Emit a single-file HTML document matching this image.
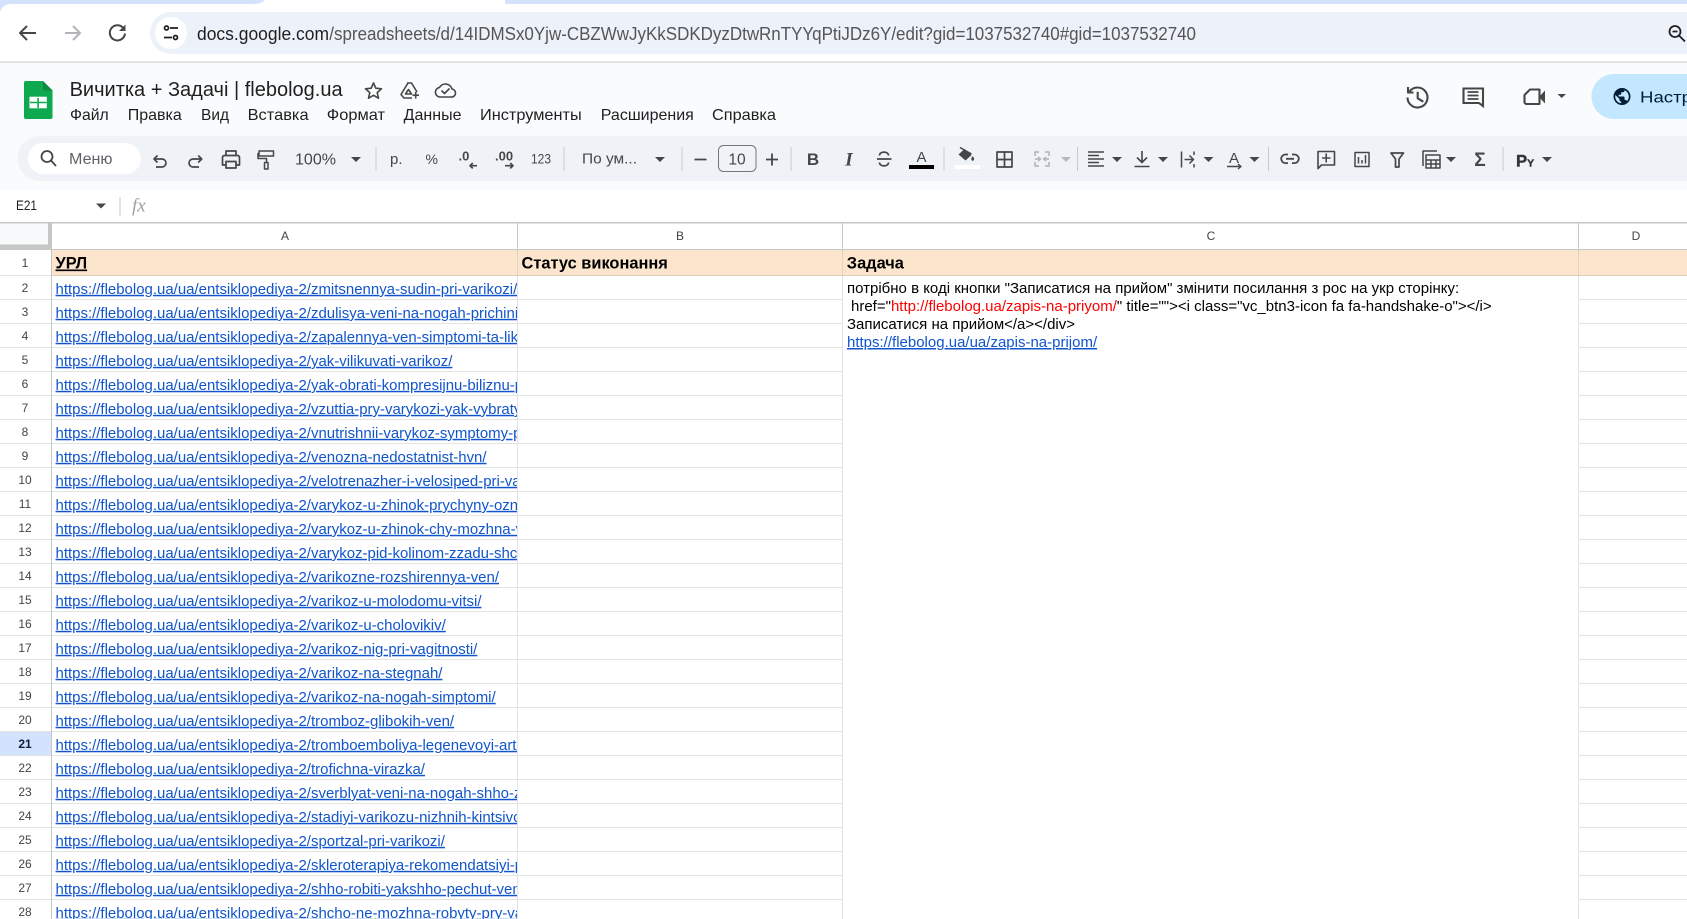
<!DOCTYPE html>
<html lang="uk"><head><meta charset="utf-8"><title>Вичитка + Задачі | flebolog.ua</title>
<style>
html,body{margin:0;padding:0;background:#fff;width:1687px;height:919px;overflow:hidden}
svg{display:block;font-family:"Liberation Sans","Noto Sans CJK SC",sans-serif}
.i{fill:none;stroke:#444746;stroke-width:1.7;stroke-linecap:butt;stroke-linejoin:round}
.c{fill:#444746;stroke:none}
.t{fill:#444746}
.m{font-size:15.6px;fill:#1f1f1f}
.lnk{font-size:14.97px;fill:#1155cc;text-decoration:underline}
.cell{font-size:15px;fill:#000}
.hd{font-size:16.4px;font-weight:bold;fill:#000}
.b{font-weight:bold}
.n{font-size:12px;fill:#444;text-anchor:middle}
.sep{stroke:#c7c9cc;stroke-width:1}
.g{stroke:#e2e3e3;stroke-width:1}
.h{stroke:#c4c7c5;stroke-width:1}
</style></head><body>
<svg width="1687" height="919" viewBox="0 0 1687 919" xmlns="http://www.w3.org/2000/svg">
<defs><clipPath id="ca"><rect x="52" y="276" width="465" height="643"/></clipPath></defs>
<rect width="1687" height="919" fill="#fff"/>
<!-- browser chrome -->
<path d="M0 0H265C262 3 258 4 254 4H12C5 4 2 7 0 12Z" fill="#d3e3fd"/>
<rect x="505" y="0" width="1182" height="4" fill="#d3e3fd"/>
<rect x="150" y="12" width="1537" height="42" rx="21" fill="#edf2fa"/>
<rect x="1600" y="12" width="87" height="42" fill="#edf2fa"/>
<circle cx="171" cy="33" r="16" fill="#fff"/>
<g class="i" style="stroke-width:2"><path d="M36 33H20M27 26L20 33L27 40"/></g>
<g class="i" style="stroke:#b1b4b8;stroke-width:2"><path d="M65 33H80M73 26L80 33L73 40"/></g>
<g class="i" style="stroke-width:2"><path d="M123.3 28A7.6 7.6 0 1 0 125 33.5"/></g><path d="M125.5 24.5V31H119Z" fill="#444746"/>
<g class="i" style="stroke:#1f1f1f;stroke-width:1.7"><circle cx="166.5" cy="28" r="2"/><path d="M170 28H178M164 37.5H172"/><circle cx="175.5" cy="37.5" r="2"/></g>
<text x="197" y="40" font-size="18" fill="#1f1f1f" textLength="132" lengthAdjust="spacingAndGlyphs">docs.google.com</text>
<text x="329.3" y="40" font-size="18" fill="#555" textLength="866.7" lengthAdjust="spacingAndGlyphs">/spreadsheets/d/14IDMSx0Yjw-CBZWwJyKkSDKDyzDtwRnTYYqPtiJDz6Y/edit?gid=1037532740#gid=1037532740</text>
<g class="i" style="stroke:#1f1f1f;stroke-width:1.8"><circle cx="1675" cy="31.5" r="5.5"/><path d="M1672.5 31.5H1677.5M1679 35.5L1685 41.5"/></g>
<rect x="0" y="61" width="1687" height="2" fill="#e3e3e3"/>
<!-- sheets header -->
<rect x="0" y="63" width="1687" height="127" fill="#f9fbfd"/>
<path d="M26 81H43L52.5 90.5V117A2 2 0 0 1 50.5 119H26A2 2 0 0 1 24 117V83A2 2 0 0 1 26 81Z" fill="#0ea94f"/>
<path d="M43 81L52.5 90.5H45A2 2 0 0 1 43 88.500Z" fill="#0b8a40"/>
<rect x="29.500" y="96.700" width="17.300" height="11.600" fill="#fff"/>
<path d="M38.100 98V108M30 102.500H46.500" stroke="#0ea94f" stroke-width="1.600"/>
<text x="69.600" y="96" font-size="20" fill="#1f1f1f" textLength="273" lengthAdjust="spacingAndGlyphs">Вичитка + Задачі | flebolog.ua</text>
<g class="i" style="stroke-width:1.6">
<path d="M373.500 83L375.800 88.200L381.500 88.800L377.200 92.600L378.500 98.200L373.500 95.300L368.500 98.200L369.800 92.600L365.500 88.800L371.200 88.200Z"/>
<path d="M407 83H411.500L417 92M408 83L401 94.500L404 98H412M405.500 94H411.500L408.500 89.500ZM415.700 92V98.500M412.500 95.200H419" />
<path d="M441 97H451A4 4 0 0 0 452 89A6.800 6.800 0 0 0 439.500 87.500A4.800 4.800 0 0 0 441 97ZM441.500 90.500L444.500 93.500L449.500 88.500"/>
</g>
<g class="m">
<text x="70" y="120" textLength="38.700" lengthAdjust="spacingAndGlyphs">Файл</text>
<text x="127.800" y="120" textLength="54" lengthAdjust="spacingAndGlyphs">Правка</text>
<text x="201" y="120" textLength="28" lengthAdjust="spacingAndGlyphs">Вид</text>
<text x="247.600" y="120" textLength="61" lengthAdjust="spacingAndGlyphs">Вставка</text>
<text x="326.800" y="120" textLength="58.200" lengthAdjust="spacingAndGlyphs">Формат</text>
<text x="403.700" y="120" textLength="57.800" lengthAdjust="spacingAndGlyphs">Данные</text>
<text x="480" y="120" textLength="101.700" lengthAdjust="spacingAndGlyphs">Инструменты</text>
<text x="600.800" y="120" textLength="93" lengthAdjust="spacingAndGlyphs">Расширения</text>
<text x="712" y="120" textLength="64" lengthAdjust="spacingAndGlyphs">Справка</text>
</g>
<!-- right header -->
<g class="i" style="stroke-width:2.100">
<path d="M1409.500 91.500A10 10 0 1 1 1407.500 97.500"/><path d="M1408 87V92.500H1413.500"/><path d="M1417.700 91.700V98.300L1423.300 101.700"/>
<path d="M1463.500 88.500H1483V106L1479 103H1463.500Z" style="stroke-linejoin:miter"/>
<path d="M1467.500 92H1478.500M1467.500 95.500H1478.500M1467.500 99H1478.500" style="stroke-width:1.800"/>
<path d="M1530 89.500H1539.500V104H1526.500A2 2 0 0 1 1524.500 102V95Z"/>
</g>
<path d="M1539 97L1545 90.500V103.500Z" fill="#444746"/>
<path d="M1557.500 94H1566L1561.700 98Z" fill="#444746"/>
<path d="M1614 74H1687V119H1614A22.500 22.500 0 0 1 1614 74Z" fill="#c2e7ff"/>
<g transform="translate(1611.800 86.300) scale(.85)"><path fill="#001d35" d="M12 2C6.480 2 2 6.480 2 12s4.480 10 10 10 10-4.480 10-10S17.520 2 12 2zm-1 17.930c-3.950-.490-7-3.850-7-7.930 0-.620.080-1.210.210-1.790L9 15v1c0 1.100.900 2 2 2v1.930zm6.900-2.540c-.260-.810-1-1.390-1.900-1.390h-1v-3c0-.550-.450-1-1-1H8v-2h2c.550 0 1-.450 1-1V7h2c1.100 0 2-.900 2-2v-.410c2.930 1.190 5 4.060 5 7.410 0 2.080-.800 3.970-2.100 5.390z"/></g>
<text x="1640" y="102.500" font-size="16" fill="#001d35" textLength="52" lengthAdjust="spacingAndGlyphs">Настр</text>
<!-- toolbar -->
<path d="M40 136H1687V181H40A22.500 22.500 0 0 1 40 136Z" fill="#eff3f8"/>
<rect x="28" y="143" width="113" height="31" rx="15.500" fill="#fff"/>
<g class="i" style="stroke-width:1.800"><circle cx="47" cy="156.500" r="5.500"/><path d="M51 160.500L56 166"/></g>
<text x="69" y="164" font-size="15.500" fill="#5f6368" textLength="43.500" lengthAdjust="spacingAndGlyphs">Меню</text>
<g class="i">
<path d="M154 159H162A4 4 0 0 1 162 167H156M157.500 155.500L154 159L157.500 162.500"/>
<path d="M201.700 159H193A4 4 0 0 0 193 167H199M198.200 155.500L201.700 159L198.200 162.500"/>
<path d="M226 155V151H236V155M226 165H222.500V157.500A2 2 0 0 1 224.500 155.500H237.500A2 2 0 0 1 239.500 157.500V165H236M226 161.500H236V168H226Z"/>
<path d="M259 151H273.500V156H259ZM259 153.500H258V158.500H266.500V162M264.500 162.500H268V169H264.500Z" style="stroke-width:1.500"/>
</g>
<text x="295" y="164.500" font-size="15.500" class="t" textLength="41" lengthAdjust="spacingAndGlyphs">100%</text>
<path d="M351 157H361L356 162Z" class="c"/>
<path d="M376 147V171M564 147V171M682 147V171M791 147V171M944 147V171M1077.500 147V171M1268.500 147V171M1503 147V171" class="sep"/>
<text x="390" y="164" font-size="15" class="t">р.</text>
<text x="425.500" y="164" font-size="14" class="t">%</text>
<text x="458.500" y="160.700" font-size="13" class="t b">.0</text>
<path d="M477 165.700H470M472.800 163L470 165.700L472.800 168.400" class="i"/>
<text x="495" y="160.700" font-size="13" class="t b">.00</text>
<path d="M505 165.700H513M510.200 163L513 165.700L510.200 168.400" class="i"/>
<text x="531" y="163.500" font-size="13.500" class="t" textLength="20" lengthAdjust="spacingAndGlyphs">123</text>
<text x="582" y="163.500" font-size="15" class="t" textLength="55" lengthAdjust="spacingAndGlyphs">По ум...</text>
<path d="M655 157H665L660 162Z" class="c"/>
<path d="M694.500 159.500H706.500M766 159.500H778M772 153.500V165.500" class="i" style="stroke-width:1.800"/>
<rect x="718.500" y="145.500" width="37.500" height="26" rx="5" fill="none" stroke="#747775" stroke-width="1"/>
<text x="737" y="164.500" font-size="15.500" class="t" text-anchor="middle">10</text>
<text x="813" y="165" font-size="17" class="t b" text-anchor="middle">B</text>
<text x="849" y="165.500" font-size="19" class="t b" font-style="italic" text-anchor="middle" font-family="Liberation Serif">I</text>
<path d="M877 159H891.500M888.500 155.500C888.500 151 879.500 151 879.500 155.500M879.500 162.500C879.500 167 888.500 167 888.500 162.500" class="i"/>
<text x="921.500" y="162" font-size="15" class="t" text-anchor="middle">A</text>
<rect x="909" y="165" width="25" height="4" fill="#000"/>
<path d="M960 147.500L971.500 154" class="i" style="stroke-width:1.500"/>
<path d="M958.500 154.500L964.500 149L971.500 155L965.500 160.500Z" fill="#444746"/>
<path d="M972.700 156C974.200 158.500 975 159.500 972.700 161C970.400 159.500 971.200 158.500 972.700 156Z" fill="#444746"/>
<rect x="954" y="165" width="26" height="4" fill="#fff"/>
<path d="M997 152H1012V167H997ZM1004.500 152V167M997 159.500H1012" class="i" style="stroke-width:1.700"/>
<path d="M1035 156V152H1039M1035 162V166H1039M1049 156V152H1045M1049 162V166H1045M1035 159H1040M1038 157L1040.500 159L1038 161M1049 159H1044M1046 157L1043.500 159L1046 161" class="i" style="stroke:#b7babd"/>
<path d="M1061 157H1071L1066 162Z" fill="#b7babd"/>
<path d="M1088 152H1104M1088 155.500H1099M1088 159H1104M1088 162.500H1099M1088 166H1104" class="i" style="stroke-width:1.500"/>
<path d="M1112 157H1122L1117 162Z" class="c"/>
<path d="M1142 151V162M1137 157.500L1142 162.500L1147 157.500M1134.500 166.500H1149.500" class="i" style="stroke-width:1.600"/>
<path d="M1158 157H1168L1163 162Z" class="c"/>
<path d="M1181.500 151.500V167.500M1184.500 159.500H1193.500M1189.500 155.500L1193.500 159.500L1189.500 163.500M1194 151.500V155M1194 164V167.500" class="i" style="stroke-width:1.500"/>
<path d="M1203.500 157H1213.500L1208.500 162Z" class="c"/>
<text x="1234" y="163" font-size="15" class="t" text-anchor="middle">A</text>
<path d="M1227 166.500H1240M1238 164L1241 166.500L1238 169" class="i" style="stroke-width:1.400"/>
<path d="M1249.500 157H1259.500L1254.500 162Z" class="c"/>
<path d="M1288 154.500H1285.500A4.300 4.300 0 0 0 1285.500 163.100H1288M1292 154.500H1294.500A4.300 4.300 0 0 1 1294.500 163.100H1292M1286 158.800H1294" class="i" style="stroke-width:1.800"/>
<path d="M1318 151.500H1334.500V165H1321.500L1318 168.500ZM1326.200 153.500V162.500M1322 158H1330.500" class="i" style="stroke-width:1.600"/>
<path d="M1355 152.500H1369V166.500H1355ZM1358.500 157V163.500M1362 160V163.500M1365.500 155V163.500" class="i" style="stroke-width:1.500"/>
<path d="M1391 153H1403.500L1399 159V167H1395.500V159Z" class="i" style="stroke-width:1.700"/>
<path d="M1423 166V151H1437M1426 155H1440V168H1426ZM1426 160H1440M1431 160V168M1436 160V168M1426 164H1440" class="i" style="stroke-width:1.500"/>
<path d="M1446 157H1456L1451 162Z" class="c"/>
<text x="1480" y="166" font-size="19" class="t b" text-anchor="middle">Σ</text>
<text x="1516" y="166.500" font-size="16.700" font-weight="bold" fill="#333" stroke="#333" stroke-width=".4">Р<tspan font-size="10.500">Y</tspan></text>
<path d="M1542 157H1552L1547 162Z" class="c"/>
<!-- formula bar -->
<rect x="0" y="190" width="1687" height="32" fill="#fff"/>
<text x="16" y="210" font-size="13.500" fill="#1f1f1f" textLength="21" lengthAdjust="spacingAndGlyphs">E21</text>
<path d="M96 203.500H106L101 208.500Z" class="c"/>
<path d="M120 197V216" class="sep"/>
<text x="132" y="211.500" font-size="19" fill="#9ea1a4" font-style="italic" font-family="Liberation Serif">fx</text>
<!-- grid headers -->
<rect x="0" y="222" width="1687" height="1.500" fill="#c7c7c7"/>
<rect x="0" y="224" width="48" height="20.500" fill="#f8f9fa"/>
<rect x="48" y="223" width="4" height="26" fill="#c4c7c5"/>
<rect x="0" y="244.500" width="52" height="4.500" fill="#c4c7c5"/>
<rect x="0" y="249" width="1687" height="1" fill="#c7c7c7"/>
<path d="M517.500 223V249M842.500 223V249M1578.500 223V249" class="h"/>
<g class="n">
<text x="285" y="240">A</text><text x="680" y="240">B</text><text x="1211" y="240">C</text><text x="1636" y="240">D</text>
</g>
<!-- row 1 -->
<rect x="52" y="250" width="1635" height="25.500" fill="#fce5cd"/>
<path d="M517.500 250V276M842.500 250V276M1578.500 250V276" stroke="#e6d3be" stroke-width="1"/>
<path d="M52 275.500H1687" stroke="#e0cdb9" stroke-width="1"/>
<!-- row highlight -->
<rect x="0" y="732" width="51" height="24" fill="#d3e3fd"/>
<!-- grid lines -->
<path class="g" d="M0 275.500H52M0 299.500H842M0 323.500H842M0 347.500H842M0 371.500H842M0 395.500H842M0 419.500H842M0 443.500H842M0 467.500H842M0 491.500H842M0 515.500H842M0 539.500H842M0 563.500H842M0 587.500H842M0 611.500H842M0 635.500H842M0 659.500H842M0 683.500H842M0 707.500H842M0 731.500H842M0 755.500H842M0 779.500H842M0 803.500H842M0 827.500H842M0 851.500H842M0 875.500H842M0 899.500H842"/>
<path class="g" d="M1579 299.500H1687M1579 323.500H1687M1579 347.500H1687M1579 371.500H1687M1579 395.500H1687M1579 419.500H1687M1579 443.500H1687M1579 467.500H1687M1579 491.500H1687M1579 515.500H1687M1579 539.500H1687M1579 563.500H1687M1579 587.500H1687M1579 611.500H1687M1579 635.500H1687M1579 659.500H1687M1579 683.500H1687M1579 707.500H1687M1579 731.500H1687M1579 755.500H1687M1579 779.500H1687M1579 803.500H1687M1579 827.500H1687M1579 851.500H1687M1579 875.500H1687M1579 899.500H1687"/>
<path class="g" d="M517.500 276V919M842.500 276V919M1578.500 276V919"/>
<path d="M51.500 250V919" class="h"/>
<!-- row numbers -->
<g class="n">
<text x="25" y="267">1</text><text x="25" y="292">2</text><text x="25" y="316">3</text><text x="25" y="340">4</text><text x="25" y="364">5</text><text x="25" y="388">6</text><text x="25" y="412">7</text><text x="25" y="436">8</text><text x="25" y="460">9</text><text x="25" y="484">10</text><text x="25" y="508">11</text><text x="25" y="532">12</text><text x="25" y="556">13</text><text x="25" y="580">14</text><text x="25" y="604">15</text><text x="25" y="628">16</text><text x="25" y="652">17</text><text x="25" y="676">18</text><text x="25" y="700">19</text><text x="25" y="724">20</text><text x="25" y="748" font-weight="bold" fill="#0b1f3f">21</text><text x="25" y="772">22</text><text x="25" y="796">23</text><text x="25" y="820">24</text><text x="25" y="844">25</text><text x="25" y="868">26</text><text x="25" y="892">27</text><text x="25" y="916">28</text>
</g>
<!-- header row text -->
<text x="55.500" y="268.500" class="hd" text-decoration="underline">УРЛ</text>
<text x="521.500" y="268.500" class="hd">Статус виконання</text>
<text x="846.800" y="268.500" class="hd">Задача</text>
<!-- links -->
<g clip-path="url(#ca)" class="lnk">
<text x="55.500" y="293.800">https://flebolog.ua/ua/entsiklopediya-2/zmitsnennya-sudin-pri-varikozi/</text>
<text x="55.500" y="317.800">https://flebolog.ua/ua/entsiklopediya-2/zdulisya-veni-na-nogah-prichini/</text>
<text x="55.500" y="341.800">https://flebolog.ua/ua/entsiklopediya-2/zapalennya-ven-simptomi-ta-likuvannya/</text>
<text x="55.500" y="365.800">https://flebolog.ua/ua/entsiklopediya-2/yak-vilikuvati-varikoz/</text>
<text x="55.500" y="389.800">https://flebolog.ua/ua/entsiklopediya-2/yak-obrati-kompresijnu-biliznu-pri-varikozi/</text>
<text x="55.500" y="413.800">https://flebolog.ua/ua/entsiklopediya-2/vzuttia-pry-varykozi-yak-vybraty/</text>
<text x="55.500" y="437.800">https://flebolog.ua/ua/entsiklopediya-2/vnutrishnii-varykoz-symptomy-prychyny/</text>
<text x="55.500" y="461.800">https://flebolog.ua/ua/entsiklopediya-2/venozna-nedostatnist-hvn/</text>
<text x="55.500" y="485.800">https://flebolog.ua/ua/entsiklopediya-2/velotrenazher-i-velosiped-pri-varikozi/</text>
<text x="55.500" y="509.800">https://flebolog.ua/ua/entsiklopediya-2/varykoz-u-zhinok-prychyny-oznaky/</text>
<text x="55.500" y="533.800">https://flebolog.ua/ua/entsiklopediya-2/varykoz-u-zhinok-chy-mozhna-vylikuvaty/</text>
<text x="55.500" y="557.800">https://flebolog.ua/ua/entsiklopediya-2/varykoz-pid-kolinom-zzadu-shcho-robyty/</text>
<text x="55.500" y="581.800">https://flebolog.ua/ua/entsiklopediya-2/varikozne-rozshirennya-ven/</text>
<text x="55.500" y="605.800">https://flebolog.ua/ua/entsiklopediya-2/varikoz-u-molodomu-vitsi/</text>
<text x="55.500" y="629.800">https://flebolog.ua/ua/entsiklopediya-2/varikoz-u-cholovikiv/</text>
<text x="55.500" y="653.800">https://flebolog.ua/ua/entsiklopediya-2/varikoz-nig-pri-vagitnosti/</text>
<text x="55.500" y="677.800">https://flebolog.ua/ua/entsiklopediya-2/varikoz-na-stegnah/</text>
<text x="55.500" y="701.800">https://flebolog.ua/ua/entsiklopediya-2/varikoz-na-nogah-simptomi/</text>
<text x="55.500" y="725.800">https://flebolog.ua/ua/entsiklopediya-2/tromboz-glibokih-ven/</text>
<text x="55.500" y="749.800">https://flebolog.ua/ua/entsiklopediya-2/tromboemboliya-legenevoyi-arteriyi/</text>
<text x="55.500" y="773.800">https://flebolog.ua/ua/entsiklopediya-2/trofichna-virazka/</text>
<text x="55.500" y="797.800">https://flebolog.ua/ua/entsiklopediya-2/sverblyat-veni-na-nogah-shho-zrobiti/</text>
<text x="55.500" y="821.800">https://flebolog.ua/ua/entsiklopediya-2/stadiyi-varikozu-nizhnih-kintsivok/</text>
<text x="55.500" y="845.800">https://flebolog.ua/ua/entsiklopediya-2/sportzal-pri-varikozi/</text>
<text x="55.500" y="869.800">https://flebolog.ua/ua/entsiklopediya-2/skleroterapiya-rekomendatsiyi-pislya/</text>
<text x="55.500" y="893.800">https://flebolog.ua/ua/entsiklopediya-2/shho-robiti-yakshho-pechut-veni/</text>
<text x="55.500" y="917.800">https://flebolog.ua/ua/entsiklopediya-2/shcho-ne-mozhna-robyty-pry-varykozi/</text>
</g>
<!-- task cell -->
<g class="cell">
<text x="847" y="293">потрібно в коді кнопки "Записатися на прийом" змінити посилання з рос на укр сторінку:</text>
<text x="851" y="311">href="<tspan fill="#ff0000">http://flebolog.ua/zapis-na-priyom/</tspan>" title=""&gt;&lt;i class="vc_btn3-icon fa fa-handshake-o"&gt;&lt;/i&gt;</text>
<text x="847" y="329">Записатися на прийом&lt;/a&gt;&lt;/div&gt;</text>
<text x="847" y="347" text-decoration="underline" style="fill:#1155cc">https://flebolog.ua/ua/zapis-na-prijom/</text>
</g>
</svg>
</body></html>
